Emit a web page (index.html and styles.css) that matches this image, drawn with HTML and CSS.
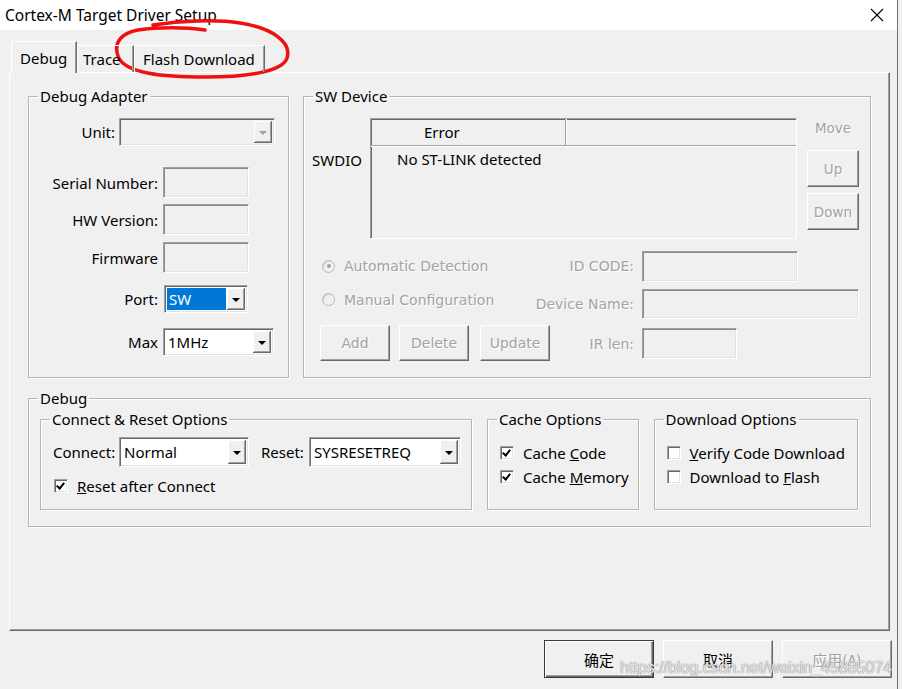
FILE: index.html
```html
<!DOCTYPE html>
<html lang="zh-CN">
<head>
    <meta charset="UTF-8">
    <title>Cortex-M Target Driver Setup</title>
    <link rel="stylesheet" href="styles.css">
</head>
<body>
<div class="window">
    <div class="titlebar">
        <span class="title">Cortex-M Target Driver Setup</span>
        <svg class="close" width="14" height="14" viewBox="0 0 14 14"><path d="M1 1L13 13M13 1L1 13" stroke="#000" stroke-width="1.1" fill="none"/></svg>
    </div>

    <div class="tabs">
        <div class="tab tab-debug active">Debug</div>
        <div class="tab tab-trace">Trace</div>
        <div class="tab tab-flash">Flash Download</div>
    </div>

    <div class="panel">
        <div class="top-row">
            <!-- 调试器 -->
            <fieldset class="group adapter">
                <legend>Debug Adapter</legend>
                <div class="arow r-unit">
                    <span class="alabel unit-label">Unit:</span>
                    <div class="combo combo-unit disabled"><span class="combo-val"></span><span class="combo-btn"></span></div>
                </div>
                <div class="arow r-serial">
                    <span class="alabel">Serial Number:</span>
                    <div class="edit edit-adapter"></div>
                </div>
                <div class="arow r-hw">
                    <span class="alabel">HW Version:</span>
                    <div class="edit edit-adapter"></div>
                </div>
                <div class="arow r-fw">
                    <span class="alabel">Firmware</span>
                    <div class="edit edit-adapter"></div>
                </div>
                <div class="arow r-port">
                    <span class="alabel">Port:</span>
                    <div class="combo combo-port"><span class="combo-val selected">SW</span><span class="combo-btn"></span></div>
                </div>
                <div class="arow r-max">
                    <span class="alabel">Max</span>
                    <div class="combo combo-max"><span class="combo-val">1MHz</span><span class="combo-btn"></span></div>
                </div>
            </fieldset>

            <!-- SW 设备 -->
            <fieldset class="group swdev">
                <legend>SW Device</legend>
                <div class="sw-top">
                    <span class="swdio">SWDIO</span>
                    <div class="listbox">
                        <div class="lb-head"><span class="lb-col1">Error</span><span class="lb-col2"></span></div>
                        <div class="lb-row">No ST-LINK detected</div>
                    </div>
                    <div class="move-col">
                        <span class="move-label dis">Move</span>
                        <button class="btn dis btn-up">Up</button>
                        <button class="btn dis btn-down">Down</button>
                    </div>
                </div>
                <div class="sw-row r-id">
                    <span class="radio-item dis"><span class="radio checked"></span>Automatic Detection</span>
                    <span class="sw-label dis">ID CODE:</span>
                    <span class="sw-cell"><span class="edit edit-id"></span></span>
                </div>
                <div class="sw-row r-name">
                    <span class="radio-item dis"><span class="radio"></span>Manual Configuration</span>
                    <span class="sw-label dis">Device Name:</span>
                    <span class="sw-cell"><span class="edit edit-name"></span></span>
                </div>
                <div class="sw-row r-ir">
                    <span class="sw-buttons">
                        <button class="btn dis btn-add">Add</button>
                        <button class="btn dis btn-delete">Delete</button>
                        <button class="btn dis btn-update">Update</button>
                    </span>
                    <span class="sw-label dis">IR len:</span>
                    <span class="sw-cell"><span class="edit edit-ir"></span></span>
                </div>
            </fieldset>
        </div>

        <fieldset class="group debug">
            <legend>Debug</legend>
            <div class="debug-row">
                <fieldset class="group conn">
                    <legend>Connect &amp; Reset Options</legend>
                    <div class="conn-row">
                        <span class="conn-label">Connect:</span>
                        <div class="combo combo-connect"><span class="combo-val">Normal</span><span class="combo-btn"></span></div>
                        <span class="reset-label">Reset:</span>
                        <div class="combo combo-reset"><span class="combo-val">SYSRESETREQ</span><span class="combo-btn"></span></div>
                    </div>
                    <div class="check-item conn-check"><span class="check checked"></span><span><u>R</u>eset after Connect</span></div>
                </fieldset>
                <fieldset class="group cache">
                    <legend>Cache Options</legend>
                    <div class="check-item first"><span class="check checked"></span><span>Cache <u>C</u>ode</span></div>
                    <div class="check-item"><span class="check checked"></span><span>Cache <u>M</u>emory</span></div>
                </fieldset>
                <fieldset class="group dl">
                    <legend>Download Options</legend>
                    <div class="check-item first"><span class="check"></span><span><u>V</u>erify Code Download</span></div>
                    <div class="check-item"><span class="check"></span><span>Download to <u>F</u>lash</span></div>
                </fieldset>
            </div>
        </fieldset>
    </div>

    <div class="footer">
        <button class="btn dlg-btn default">确定</button>
        <button class="btn dlg-btn">取消</button>
        <button class="btn dlg-btn dlg-dis">应用(A)</button>
    </div>

    <!-- 红色圈注 -->
    <svg class="annot" width="300" height="90" viewBox="0 0 300 90">
        <path d="M153 25 C180 21 215 19 240 23 C272 28 292 42 287 58 C283 71 250 77 205 77 C165 77 124 74 118 56 C113 42 122 33 138 30 C158 27 185 27 205 30" stroke="#f01010" stroke-width="3.5" fill="none" stroke-linecap="round"/>
    </svg>

    <div class="watermark">https://blog.csdn.net/weixin_45885074</div>
</div>
</body>
</html>
```

FILE: styles.css
```css
body {
    margin: 0;
    background: #f0f0f0;
    font-family: "Noto Sans", "Noto Sans CJK SC", sans-serif;
    font-size: 15px;
    color: #000;
}
.window {
    position: relative;
    width: 897px;
    height: 689px;
    border-right: 1px solid #6f6f6f;
    background: #f0f0f0;
    overflow: hidden;
}
.titlebar {
    height: 30px;
    background: #fff;
    display: flex;
    align-items: center;
    justify-content: space-between;
    padding: 0 13px 0 5px;
}
.title {
    font-size: 15.5px;
    line-height: 20px;
}

/* tabs */
.tabs {
    display: flex;
    align-items: flex-end;
    height: 42px;
    box-sizing: border-box;
    padding-left: 11px;
    position: relative;
    z-index: 1;
}
.tab {
    height: 27px;
    box-sizing: border-box;
    padding-left: 8px;
    border-top: 1px solid #fff;
    border-left: 1px solid #fff;
    border-right: 1px solid #696969;
    box-shadow: inset -1px 0 0 #a0a0a0;
    display: flex;
    align-items: center;
    line-height: 18px;
    white-space: nowrap;
}
.tab-debug { width: 66px; }
.tab-trace { width: 57px; padding-left: 5px; }
.tab-flash { width: 131px; }
.tab.active {
    height: 32px;
    margin-bottom: -1px;
    background: #f0f0f0;
}

.panel {
    width: 881px;
    height: 559px;
    box-sizing: border-box;
    margin-left: 9px;
    border-top: 1px solid #fff;
    border-left: 1px solid #fff;
    border-right: 1px solid #696969;
    border-bottom: 1px solid #696969;
    box-shadow: inset -1px -1px 0 #a0a0a0;
    padding: 14px 0 0 18px;
}

/* group box */
.group {
    box-sizing: border-box;
    margin: 0;
    padding: 0;
    min-width: 0;
    border: 1px solid #b5b5b5;
    box-shadow: 1px 1px 0 #fff, inset 1px 1px 0 #fff;
}
.group legend {
    margin-left: 9px;
    padding: 0 2px;
    line-height: 18px;
}
.top-row {
    display: flex;
    gap: 14px;
}

/* 3D controls */
.edit {
    display: block;
    box-sizing: border-box;
    border: 1px solid;
    border-color: #a0a0a0 #fff #fff #a0a0a0;
    box-shadow: inset 1px 1px 0 #8a8a8a, inset -1px -1px 0 #e3e3e3;
    background: #f0f0f0;
}
.combo {
    display: flex;
    box-sizing: border-box;
    height: 28px;
    border: 1px solid;
    border-color: #a0a0a0 #fff #fff #a0a0a0;
    box-shadow: inset 1px 1px 0 #696969, inset -1px -1px 0 #e3e3e3;
    background: #fff;
    padding: 2px;
}
.combo.disabled {
    background: #f0f0f0;
}
.combo-val {
    flex: 1;
    padding-left: 2px;
    line-height: 22px;
    white-space: nowrap;
}
.combo-val.selected {
    background: #0078d7;
    color: #fff;
    margin-right: 1px;
}
.combo-btn {
    width: 18px;
    background: #f0f0f0;
    box-shadow: inset -1px -1px 0 #696969, inset 1px 1px 0 #fff, inset -2px -2px 0 #a0a0a0;
    display: flex;
    align-items: center;
    justify-content: center;
}
.combo-btn::after {
    content: "";
    border-left: 4px solid transparent;
    border-right: 4px solid transparent;
    border-top: 4px solid #000;
    margin-top: 1px;
}
.combo.disabled .combo-btn::after {
    border-top-color: #a0a0a0;
}
.btn {
    box-sizing: border-box;
    margin: 0;
    padding: 0;
    border: 1px solid;
    border-color: #fff #696969 #696969 #fff;
    box-shadow: inset -1px -1px 0 #a0a0a0;
    background: #f0f0f0;
    font-family: "Noto Sans", "Noto Sans CJK SC", sans-serif;
    font-size: 15px;
    color: #000;
}
.dis {
    color: #a3a3a3;
    text-shadow: 1px 1px 0 #fff;
    font-family: "DejaVu Sans", sans-serif;
    font-size: 13.5px;
}

/* debug adapter */
.adapter {
    width: 261px;
    padding-bottom: 21px;
}
.arow {
    display: flex;
    align-items: center;
}
.alabel {
    width: 129px;
    margin-right: 5px;
    text-align: right;
    white-space: nowrap;
}
.unit-label {
    width: 86px;
    margin-right: 4px;
}
.r-unit { margin-top: 13px; }
.r-serial { margin-top: 21px; }
.r-hw { margin-top: 6px; }
.r-fw { margin-top: 7px; }
.r-port { margin-top: 12px; }
.r-max { margin-top: 15px; }
.combo-unit { width: 156px; }
.edit-adapter { width: 86px; height: 31px; }
.combo-port { width: 84px; margin-left: 1px; }
.combo-max { width: 111px; }

/* sw device */
.swdev {
    width: 568px;
    padding: 0 10px 15px 0;
}
.sw-top {
    display: flex;
    margin: 13px 0 0 8px;
}
.swdio {
    width: 58px;
    margin-top: 33px;
    line-height: 18px;
}
.listbox {
    width: 427px;
    height: 121px;
    box-sizing: border-box;
    border: 1px solid;
    border-color: #a0a0a0 #fff #fff #a0a0a0;
    box-shadow: inset 1px 1px 0 #696969;
}
.lb-head {
    display: flex;
    height: 26px;
    border-bottom: 1px solid #a0a0a0;
    box-shadow: 0 1px 0 #fff;
}
.lb-col1 {
    width: 195px;
    box-sizing: border-box;
    padding-left: 53px;
    line-height: 25px;
    padding-top: 1px;
    border-right: 1px solid #a0a0a0;
    box-shadow: 1px 0 0 #fff;
}
.lb-row {
    padding: 1px 0 0 26px;
    line-height: 25px;
}
.move-col {
    width: 52px;
    margin-left: 10px;
    display: flex;
    flex-direction: column;
}
.move-label {
    text-align: center;
    line-height: 18px;
    margin-top: 1px;
}
.btn-up {
    height: 37px;
    margin-top: 13px;
}
.btn-down {
    height: 37px;
    margin-top: 6px;
}
.sw-row {
    display: flex;
    align-items: center;
    padding-left: 17px;
}
.r-id { margin-top: 12px; height: 30px; }
.r-name { margin-top: 8px; height: 29px; }
.r-ir { margin-top: 7px; height: 36px; }
.radio-item {
    display: flex;
    align-items: center;
    white-space: nowrap;
    font-size: 14px;
}
.radio {
    width: 11px;
    height: 11px;
    border-radius: 50%;
    border: 1px solid #b9b9b9;
    box-shadow: inset 1px 1px 0 #d5d5d5;
    background: #f0f0f0;
    margin-right: 9px;
    margin-left: 1px;
    display: flex;
    align-items: center;
    justify-content: center;
}
.radio.checked::after {
    content: "";
    width: 4px;
    height: 4px;
    border-radius: 50%;
    background: #a0a0a0;
}
.r-name .radio-item {
    margin-top: -8px;
}
.sw-label {
    flex: 1;
    text-align: right;
    margin-right: 8px;
    white-space: nowrap;
    font-size: 14px;
}
.sw-cell {
    width: 218px;
}
.edit-id { width: 156px; height: 31px; }
.edit-name { width: 217px; height: 30px; }
.edit-ir { width: 95px; height: 31px; }
.sw-buttons {
    display: flex;
    gap: 9px;
    margin-left: -1px;
}
.sw-buttons .btn {
    height: 36px;
    width: 70px;
    font-size: 14px;
}
.btn-update {
    margin-left: 2px;
}
.r-ir .sw-label {
    margin-top: 1px;
}

/* debug options */
.debug {
    margin-top: 11px;
    width: 843px;
    padding: 0 12px 16px 0;
}
.debug-row {
    display: flex;
    gap: 15px;
    margin: 3px 0 0 11px;
}
.debug-row .group {
    height: 100px;
}
.conn { width: 433px; }
.cache { width: 152px; }
.dl { width: 205px; }
.conn-row {
    display: flex;
    align-items: center;
    margin: 9px 0 0 12px;
}
.conn-label {
    width: 66px;
    white-space: nowrap;
}
.reset-label {
    width: 48px;
    margin-left: 12px;
}
.combo-connect { width: 130px; height: 30px; }
.combo-reset { width: 152px; height: 30px; }
.combo-connect .combo-val, .combo-reset .combo-val { line-height: 24px; }
.check-item {
    display: flex;
    align-items: center;
    line-height: 18px;
    margin: 6px 0 0 12px;
    white-space: nowrap;
}
.check-item.first {
    margin-top: 16px;
}
.conn-check {
    margin: 10px 0 0 13px;
}
.check {
    width: 14px;
    height: 14px;
    box-sizing: border-box;
    border: 1px solid;
    border-color: #a0a0a0 #fff #fff #a0a0a0;
    box-shadow: inset 1px 1px 0 #696969, inset -1px -1px 0 #e3e3e3;
    background: #fff;
    margin-right: 9px;
    position: relative;
}
.check.checked::after {
    content: "";
    position: absolute;
    left: 3px;
    top: 1px;
    width: 3px;
    height: 6px;
    border-right: 2px solid #000;
    border-bottom: 2px solid #000;
    transform: rotate(40deg);
}

/* dialog buttons */
.footer {
    display: flex;
    justify-content: flex-end;
    gap: 9px;
    padding: 9px 5px 0 0;
}
.dlg-btn {
    width: 110px;
    height: 38px;
    font-family: "Noto Sans CJK SC", sans-serif;
}
.dlg-btn.default {
    border: 1px solid #3a3a3a;
    box-shadow: inset 1px 1px 0 #fff, inset -1px -1px 0 #696969, inset -2px -2px 0 #a0a0a0;
}
.dlg-dis {
    color: #a0a0a0;
    text-shadow: 1px 1px 0 #fff;
}

/* overlays */
.annot {
    position: absolute;
    left: 0;
    top: 0;
    pointer-events: none;
}
.watermark {
    position: absolute;
    left: 620px;
    top: 659px;
    font-family: "Liberation Sans", sans-serif;
    font-size: 16px;
    color: rgba(255, 255, 255, 0.8);
    text-shadow: 0 0 1px #777, 0 0 1px #999;
    pointer-events: none;
    white-space: nowrap;
}
```
